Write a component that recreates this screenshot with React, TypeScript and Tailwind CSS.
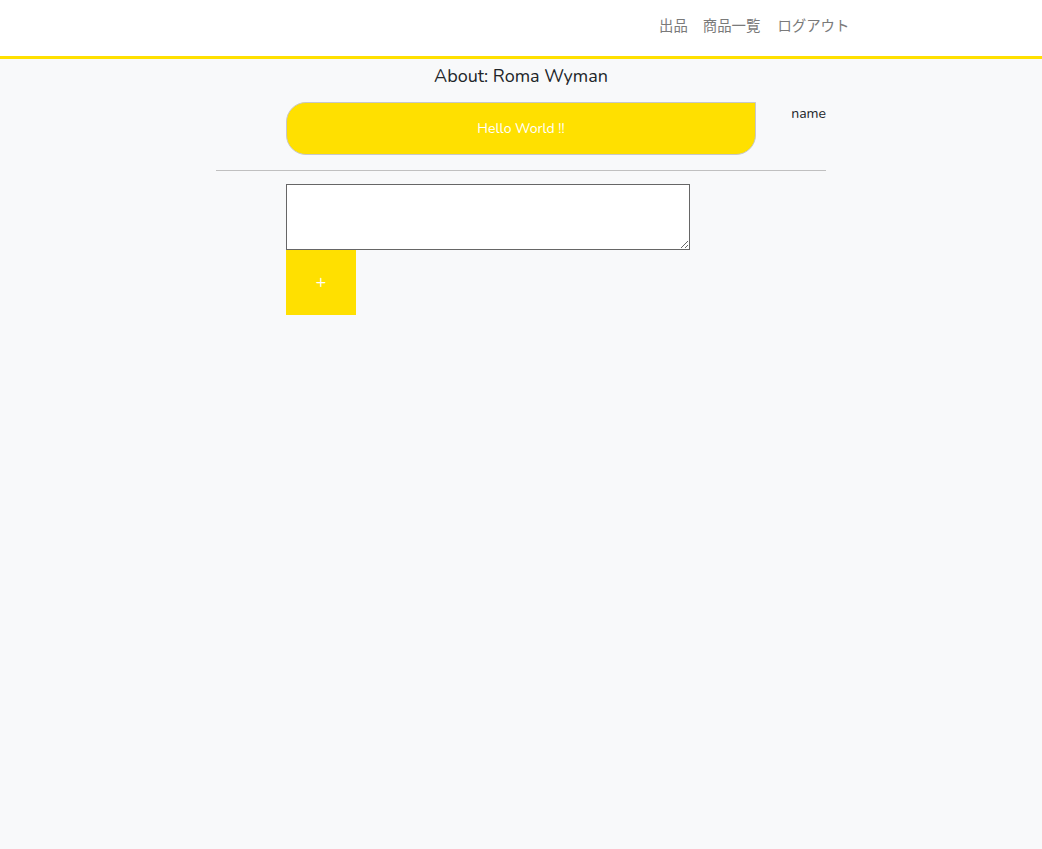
import React from "react";

export default function App() {
  return (
    <div
      className="min-h-[849px] bg-[#f8f9fa] text-[#212529]"
      style={{ fontFamily: "Nunito, Lato, 'Noto Sans', 'Noto Sans CJK JP', sans-serif" }}
    >
      <header className="h-[59px] bg-white border-b-[3px] border-[#ffe000]">
        <nav className="flex h-[56px] items-center">
          <div className="ml-[659px] flex items-center text-[14.4px] text-[#7a7a7a] pb-[6px]" style={{ fontFamily: "'Noto Sans CJK JP', sans-serif" }}>
            <a>出品</a>
            <a className="ml-[15px]">商品一覧</a>
            <a className="ml-[17px]">ログアウト</a>
          </div>
        </nav>
      </header>
      <main className="mx-auto w-[610px]">
        <h1 className="text-center text-[18px] leading-[24px] pt-[5px] h-[43px]">About: Roma Wyman</h1>
        <div className="flex items-start">
          <div className="ml-[70px] w-[470px] h-[53px] bg-[#ffe000] border border-[#c8c8c8] rounded-[20px] rounded-tr-none flex items-center justify-center text-white text-[14px]">
            Hello World !!
          </div>
          <div className="ml-auto text-[14px] leading-[20px] pt-[2px]">name</div>
        </div>
        <hr className="mt-[15px] border-t border-[#c0c0c0]" />
        <div className="ml-[70px] mt-[13px] flex flex-col">
          <textarea className="w-[404px] h-[66px] bg-white border border-[#666] block" />
          <button className="w-[70px] h-[65px] bg-[#ffe000] text-white text-[18px]">+</button>
        </div>
      </main>
    </div>
  );
}
